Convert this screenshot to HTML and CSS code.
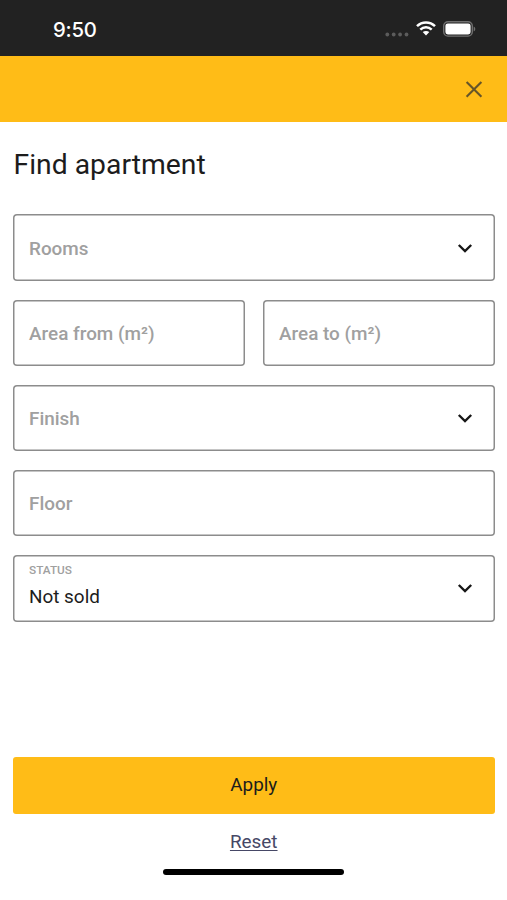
FILE: index.html
```html
<!DOCTYPE html>
<html lang="en">
<head>
<meta charset="utf-8">
<title>Find apartment</title>
<link rel="stylesheet" href="styles.css">
</head>
<body>
<div class="screen">
  <header class="status-bar">
    <span class="time">9:50</span>
    <div class="indicators">
      <svg class="cellular" width="24" height="5" viewBox="0 0 24 5"><g fill="#5c5c5c"><circle cx="2.3" cy="2.5" r="1.9"/><circle cx="8.7" cy="2.5" r="1.9"/><circle cx="15.1" cy="2.5" r="1.9"/><circle cx="21.5" cy="2.5" r="1.9"/></g></svg>
      <svg class="wifi" width="20" height="15" viewBox="0 0 20 15"><g fill="none" stroke="#fff" stroke-width="2.5"><path d="M1 5.2C6 .2 14 .2 19 5.2"/><path d="M4.3 8.6C7.6 5.5 12.4 5.5 15.7 8.6"/></g><path fill="#fff" d="M6.7 11.1C8.6 9.5 11.4 9.5 13.3 11.1L10 14.5Z"/></svg>
      <svg class="battery" width="33" height="16" viewBox="0 0 33 16"><rect x=".7" y=".7" width="28.6" height="14.4" rx="4.3" fill="none" stroke="#707070" stroke-width="1.4"/><rect x="2.4" y="2.4" width="25.2" height="11" rx="2.4" fill="#fff"/><path d="M30.7 5.4C32.8 6.3 32.8 9.5 30.7 10.4Z" fill="#707070"/></svg>
    </div>
  </header>
  <div class="top-bar">
    <button class="close" aria-label="Close"><svg width="18" height="18" viewBox="0 0 18 18"><path d="M1.6 1.9L16.4 16.7M16.4 1.9L1.6 16.7" stroke="#665529" stroke-width="2.1" fill="none"/></svg></button>
  </div>
  <main class="content">
    <h1>Find apartment</h1>
    <div class="fields">
      <div class="field"><span class="label">Rooms</span><svg class="chevron" viewBox="0 0 16 10"><path d="M1.8 2L8 8L14.2 2"/></svg></div>
      <div class="row">
        <div class="field"><span class="label">Area from (m²)</span></div>
        <div class="field"><span class="label">Area to (m²)</span></div>
      </div>
      <div class="field"><span class="label">Finish</span><svg class="chevron" viewBox="0 0 16 10"><path d="M1.8 2L8 8L14.2 2"/></svg></div>
      <div class="field"><span class="label">Floor</span></div>
      <div class="field"><div class="filled"><span class="caption">STATUS</span><span class="value">Not sold</span></div><svg class="chevron" viewBox="0 0 16 10"><path d="M1.8 2L8 8L14.2 2"/></svg></div>
    </div>
  </main>
  <footer class="actions">
    <button class="apply">Apply</button>
    <a class="reset">Reset</a>
    <div class="home-indicator"></div>
  </footer>
</div>
</body>
</html>
```
FILE: styles.css
```css
* { box-sizing: border-box; }
body { margin: 0; background: #fff; font-family: Roboto, sans-serif; color: #1c1c1c; }
button { border: 0; padding: 0; font: inherit; color: inherit; }
svg { display: block; }
.screen { width: 507px; height: 900px; display: flex; flex-direction: column; overflow: hidden; }
.status-bar { height: 56.2px; background: #222; display: flex; justify-content: space-between; align-items: flex-start; padding: 0 31.5px 0 53px; }
.time { font: 500 20.3px/24px Inter, sans-serif; color: #fff; margin-top: 18px; letter-spacing: -.2px; }
.indicators { display: flex; align-items: flex-start; margin-top: 21.4px; }
.cellular { margin: 11px 7px 0 0; }
.wifi { margin-right: 7px; }
.top-bar { height: 66.2px; background: #ffbc17; display: flex; align-items: center; justify-content: flex-end; padding-right: 24px; }
.close { background: none; width: 18px; height: 18px; }
.content { padding: 0 12.5px 0 13px; }
h1 { font-size: 28.3px; font-weight: 400; line-height: 34px; margin: 25.6px 0 32.4px .6px; }
.fields { display: flex; flex-direction: column; gap: 18.8px; }
.row { display: grid; grid-template-columns: 1fr 1fr; gap: 18.5px; }
.field { height: 66.4px; box-shadow: inset 0 0 0 1.5px #8c8c8c; border-radius: 4px; display: flex; align-items: center; justify-content: space-between; padding: 0 22px 0 16px; }
.label { font-size: 18.9px; font-weight: 500; line-height: 24px; color: #a0a0a0; margin-top: 2px; }
.chevron { width: 16px; height: 10px; fill: none; stroke: #171717; stroke-width: 2.4; }
.filled { display: flex; flex-direction: column; margin-top: -5px; }
.caption { font-size: 11.8px; font-weight: 500; line-height: 14px; color: #a0a0a0; margin-bottom: 7.5px; }
.value { font-size: 18.9px; line-height: 24px; }
.actions { margin-top: auto; height: 143px; padding: 0 12.5px 0 13px; display: flex; flex-direction: column; align-items: center; }
.apply { width: 100%; height: 57px; background: #ffbc17; border-radius: 3px; font-size: 18.9px; padding-bottom: 1.5px; flex: none; }
.reset { font-size: 18.9px; line-height: 24px; margin-top: 16px; color: #464866; text-decoration: underline; text-underline-offset: 2px; }
.home-indicator { width: 181px; height: 6px; border-radius: 3px; background: #000; margin-top: 15px; }
```
